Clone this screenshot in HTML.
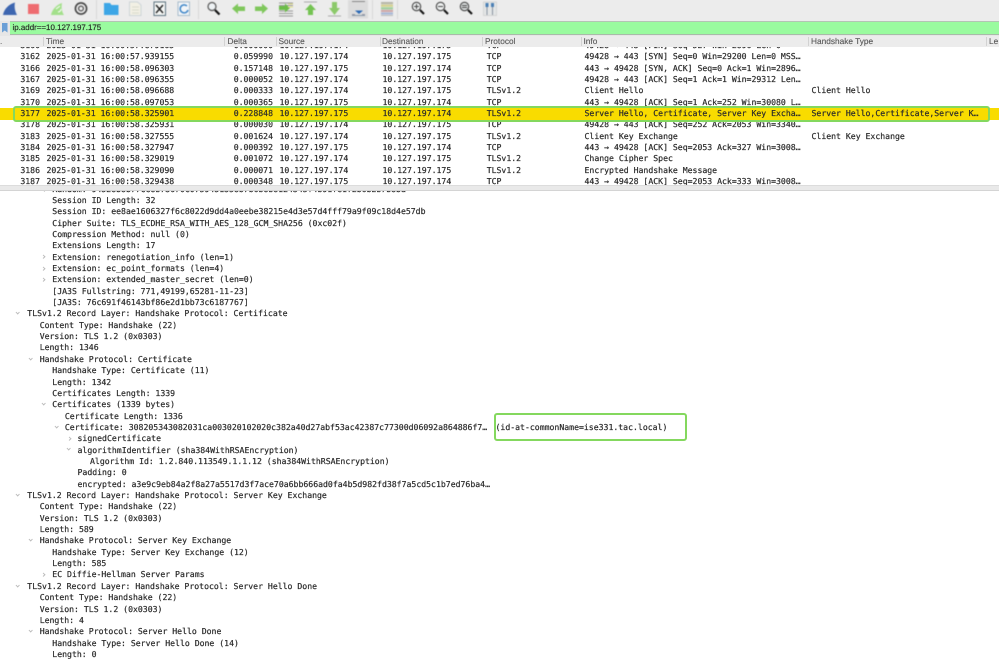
<!DOCTYPE html>
<html><head><meta charset="utf-8"><title>Wireshark</title>
<style>
html,body{margin:0;padding:0;background:#fff;width:999px;height:660px;overflow:hidden}
body{position:relative;font-family:"DejaVu Sans Mono","Liberation Mono",monospace;font-size:8.17px;color:#2b2b2b;text-rendering:geometricPrecision;-webkit-text-stroke:.2px #2b2b2b}
.abs{position:absolute}
#tb{left:0;top:0;width:999px;height:21px;background:#ececec}
#tb svg{position:absolute;left:0;top:0;filter:blur(.5px)}
#fb{left:0;top:21px;width:999px;height:15px;background:#e6e6e6}
#fg{left:10px;top:22px;width:989px;height:11.5px;background:#9afb9f;border-top:1px solid #b4c4b4;border-bottom:1px solid #a9bba9;box-sizing:content-box;margin-top:-1px}
#ft{left:12.5px;top:22px;height:12px;font:7.95px/11.5px "Liberation Sans",sans-serif;color:#2c3a2c;z-index:2;white-space:pre}
#hd{left:0;top:36px;width:999px;height:11px;background:#ececec;font:8.3px/11px "Liberation Sans",sans-serif;color:#555;-webkit-text-stroke:.1px #555}
#hd span{position:absolute;top:0;white-space:pre}
#hd b{position:absolute;top:1px;width:1px;height:9px;background:#d2d2d2}
#pl{left:0;top:47px;width:999px;height:138px;overflow:hidden;background:#fff}
.r{position:absolute;left:0;width:999px;height:11.33px;line-height:11.33px;white-space:pre;margin-top:.6px}
.r span{position:absolute;top:0}
.n{right:959px}.t{left:46.5px}.d{right:726px}.s{left:279.5px}.e{left:382.5px}.p{left:486.7px}.i{left:584.5px}.h{left:811.5px}
#sb{left:0;top:184.5px;width:999px;height:6.5px;background:#e9e9e9;border-top:1px solid #dcdcdc;border-bottom:1px solid #d4d4d4;box-sizing:border-box}
#dt{left:0;top:191px;width:999px;height:469px;overflow:hidden;background:#fff}
.l{position:absolute;height:11.35px;line-height:11.35px;white-space:pre;left:0;margin-top:.3px}
.l i{position:absolute;width:2.4px;height:2.4px;border-right:1px solid #bbb;border-bottom:1px solid #bbb}
i.o{transform:rotate(45deg);top:2.8px}
i.c{transform:rotate(-45deg);top:3.8px}
.gb{position:absolute;border:2px solid #84d85e;border-radius:3px;box-sizing:border-box}
#all{position:absolute;left:0;top:0;width:999px;height:660px;filter:blur(.3px)}
</style></head>
<body><div id="all">
<div id="tb" class="abs">
<svg width="999" height="21" viewBox="0 0 999 21">
<path d="M3 15 C4 9 9 4 15 2.500 C14 7 15 11 17 15 Z" fill="#3d66b0"/>
<rect x="28" y="4" width="11" height="10" fill="#ee6c70"/>
<path d="M51 15 C52 10 56 5 62 3 C61 8 62 12 64 15 Z" fill="#a3e08b"/><path d="M56 9l4-3M58 12a3 3 0 0 0 3-3" stroke="#fff" fill="none"/>
<circle cx="81" cy="8.500" r="5.600" fill="none" stroke="#444" stroke-width="1.600"/><circle cx="81" cy="8.500" r="2.400" fill="none" stroke="#555" stroke-width="1.300"/>
<rect x="96" y="0" width="1" height="19" fill="#d8d8d8"/>
<path d="M104 3h6l1.500 2h7v10h-14.500z" fill="#3ca6e6"/>
<path d="M129.500 2h8l3.500 3v10.500h-11.500z" fill="#f2f0e4" stroke="#cdd4d8"/><path d="M132 7h7M132 10h7M132 13h7" stroke="#d9d9cc"/>
<path d="M154 2h11.500v13.500h-11.500z" fill="#f4f6f4" stroke="#5d7380"/><path d="M156 5l7 8M163 5l-7 8" stroke="#222" stroke-width="1.400"/>
<path d="M178 2h11.500v13.500h-11.500z" fill="#f2f5f8" stroke="#a8bccb"/><path d="M187 6a4 4 0 1 0 1 4" fill="none" stroke="#3f86c8" stroke-width="1.500"/>
<rect x="198" y="0" width="1" height="19" fill="#d8d8d8"/>
<circle cx="212" cy="6.500" r="4" fill="#eef2f4" stroke="#555" stroke-width="1.200"/><path d="M215 10l4.500 4.500" stroke="#111" stroke-width="2.200"/>
<path d="M232 8.500l6-5v3h7v4.500h-7v3z" fill="#7fc75c"/>
<path d="M268 8.500l-6-5v3h-7v4.500h7v3z" fill="#7fc75c"/>
<path d="M279 3h14M279 5.500h14M279 11h14M279 13.500h14M279 16h14" stroke="#9a9a9a"/><path d="M279 6h6v-2.500l5 4.500-5 4.500v-2.500h-6z" fill="#6bbd48"/><path d="M288 4h5M288 7h5" stroke="#e3e08a"/>
<path d="M304 2h13" stroke="#aaa"/><path d="M310.500 4l5.500 6h-3v5h-5v-5h-3z" fill="#74c352"/>
<path d="M328 16h13" stroke="#aaa"/><path d="M332 2h5v6h3l-5.500 7-5.500-7h3z" fill="#8cc96a"/>
<rect x="348" y="0" width="20" height="18.500" fill="#dcdcdc"/><path d="M352 1.500h13" stroke="#888"/><path d="M352 14.500h3M362 14.500h3" stroke="#99a"/><path d="M355 10.500h8l-4 3.500z" fill="#2c69b5"/><path d="M352 15.500h13" stroke="#8a9aa8"/>
<rect x="372" y="0" width="1" height="19" fill="#d8d8d8"/>
<rect x="381" y="2" width="12" height="2.200" fill="#b7b7a8"/><rect x="381" y="4.600" width="12" height="2.200" fill="#d5d28f"/><rect x="381" y="7.200" width="12" height="2.200" fill="#9fcf9f"/><rect x="381" y="9.800" width="12" height="2.200" fill="#cfa8a8"/><rect x="381" y="12.400" width="12" height="2.200" fill="#a8b8d6"/><rect x="381" y="15" width="12" height="1" fill="#bbb"/>
<rect x="397" y="0" width="1" height="19" fill="#d8d8d8"/>
<circle cx="416.500" cy="6.500" r="4.200" fill="#eef0f0" stroke="#444" stroke-width="1.100"/><path d="M420 10l4 4" stroke="#111" stroke-width="2"/><path d="M414 6.500h5M416.500 4v5" stroke="#444"/>
<circle cx="440.500" cy="6.500" r="4.200" fill="#eef0f0" stroke="#444" stroke-width="1.100"/><path d="M444 10l4 4" stroke="#111" stroke-width="2"/><path d="M438 6.500h5" stroke="#444"/>
<circle cx="464.500" cy="6.500" r="4.200" fill="#dfe3e3" stroke="#444" stroke-width="1.100"/><path d="M468 10l4 4" stroke="#111" stroke-width="2"/><path d="M462 5.500h5M462 7.500h5" stroke="#444"/>
<rect x="483.500" y="2" width="13" height="13.500" fill="#e3e6e6" stroke="#c7c7c7" stroke-width=".6"/><path d="M487 3v12M492.500 3v12" stroke="#8a93a0"/><rect x="485.500" y="3" width="3" height="4" fill="#4a7fb5"/><rect x="491" y="3" width="3" height="4" fill="#4a7fb5"/>
</svg>
</div>
<div id="fb" class="abs"></div>
<svg class="abs" style="left:2px;top:23px" width="6" height="10"><path d="M0 0h5.500v9.500l-2.750-2-2.750 2z" fill="#6a9fd6"/></svg>
<div id="fg" class="abs"></div>
<div id="ft" class="abs">ip.addr==10.127.197.175</div>
<div id="hd" class="abs">
<span style="left:0;color:#777">.</span>
<b style="left:43px"></b><span style="left:46px">Time</span>
<b style="left:224px"></b><span style="left:227.500px">Delta</span>
<b style="left:276px"></b><span style="left:278.500px">Source</span>
<b style="left:380px"></b><span style="left:382px">Destination</span>
<b style="left:482px"></b><span style="left:485px">Protocol</span>
<b style="left:581px"></b><span style="left:583.500px">Info</span>
<b style="left:808px"></b><span style="left:811px">Handshake Type</span>
<b style="left:986px"></b><span style="left:989px">Le</span>
</div>
<div id="pl" class="abs">
<div class="r" style="top:-7.700px"><span class="n">3160</span><span class="t">2025-01-31 16:00:57.879165</span><span class="d">0.000000</span><span class="s">10.127.197.174</span><span class="e">10.127.197.175</span><span class="p">TCP</span><span class="i">49428 → 443 [FIN] Seq=527 Win=2896 Len=0</span></div>
<div class="r" style="top:3.630px"><span class="n">3162</span><span class="t">2025-01-31 16:00:57.939155</span><span class="d">0.059990</span><span class="s">10.127.197.174</span><span class="e">10.127.197.175</span><span class="p">TCP</span><span class="i">49428 → 443 [SYN] Seq=0 Win=29200 Len=0 MSS…</span></div>
<div class="r" style="top:14.960px"><span class="n">3166</span><span class="t">2025-01-31 16:00:58.096303</span><span class="d">0.157148</span><span class="s">10.127.197.175</span><span class="e">10.127.197.174</span><span class="p">TCP</span><span class="i">443 → 49428 [SYN, ACK] Seq=0 Ack=1 Win=2896…</span></div>
<div class="r" style="top:26.290px"><span class="n">3167</span><span class="t">2025-01-31 16:00:58.096355</span><span class="d">0.000052</span><span class="s">10.127.197.174</span><span class="e">10.127.197.175</span><span class="p">TCP</span><span class="i">49428 → 443 [ACK] Seq=1 Ack=1 Win=29312 Len…</span></div>
<div class="r" style="top:37.620px"><span class="n">3169</span><span class="t">2025-01-31 16:00:58.096688</span><span class="d">0.000333</span><span class="s">10.127.197.174</span><span class="e">10.127.197.175</span><span class="p">TLSv1.2</span><span class="i">Client Hello</span><span class="h">Client Hello</span></div>
<div class="r" style="top:48.950px"><span class="n">3170</span><span class="t">2025-01-31 16:00:58.097053</span><span class="d">0.000365</span><span class="s">10.127.197.175</span><span class="e">10.127.197.174</span><span class="p">TCP</span><span class="i">443 → 49428 [ACK] Seq=1 Ack=252 Win=30080 L…</span></div>
<div class="r" style="top:71.610px"><span class="n">3178</span><span class="t">2025-01-31 16:00:58.325931</span><span class="d">0.000030</span><span class="s">10.127.197.174</span><span class="e">10.127.197.175</span><span class="p">TCP</span><span class="i">49428 → 443 [ACK] Seq=252 Ack=2053 Win=3340…</span></div>
<div style="position:absolute;left:0;top:61px;width:999px;height:12px;background:#f9dc00"></div>
<div class="r" style="top:60.280px"><span class="n">3177</span><span class="t">2025-01-31 16:00:58.325901</span><span class="d">0.228848</span><span class="s">10.127.197.175</span><span class="e">10.127.197.174</span><span class="p">TLSv1.2</span><span class="i">Server Hello, Certificate, Server Key Excha…</span><span class="h">Server Hello,Certificate,Server K…</span></div>
<div class="r" style="top:82.940px"><span class="n">3183</span><span class="t">2025-01-31 16:00:58.327555</span><span class="d">0.001624</span><span class="s">10.127.197.174</span><span class="e">10.127.197.175</span><span class="p">TLSv1.2</span><span class="i">Client Key Exchange</span><span class="h">Client Key Exchange</span></div>
<div class="r" style="top:94.270px"><span class="n">3184</span><span class="t">2025-01-31 16:00:58.327947</span><span class="d">0.000392</span><span class="s">10.127.197.175</span><span class="e">10.127.197.174</span><span class="p">TCP</span><span class="i">443 → 49428 [ACK] Seq=2053 Ack=327 Win=3008…</span></div>
<div class="r" style="top:105.600px"><span class="n">3185</span><span class="t">2025-01-31 16:00:58.329019</span><span class="d">0.001072</span><span class="s">10.127.197.174</span><span class="e">10.127.197.175</span><span class="p">TLSv1.2</span><span class="i">Change Cipher Spec</span></div>
<div class="r" style="top:116.930px"><span class="n">3186</span><span class="t">2025-01-31 16:00:58.329090</span><span class="d">0.000071</span><span class="s">10.127.197.174</span><span class="e">10.127.197.175</span><span class="p">TLSv1.2</span><span class="i">Encrypted Handshake Message</span></div>
<div class="r" style="top:128.260px"><span class="n">3187</span><span class="t">2025-01-31 16:00:58.329438</span><span class="d">0.000348</span><span class="s">10.127.197.175</span><span class="e">10.127.197.174</span><span class="p">TCP</span><span class="i">443 → 49428 [ACK] Seq=2053 Ack=333 Win=3008…</span></div>
</div>
<div id="sb" class="abs"></div>
<div class="gb" style="left:12.500px;top:105.800px;width:977px;height:16.200px"></div>
<div id="dt" class="abs">
<div class="l" style="top:-7.400px;padding-left:52.300px"><i class="c" style="left:43px"></i>Random: 94528b8b77ce8b73670c0759451358b7b6b8b8124345f4b91fe1f2b6b2b7b8ba</div>
<div class="l" style="top:3.650px;padding-left:52.300px">Session ID Length: 32</div>
<div class="l" style="top:15px;padding-left:52.300px">Session ID: ee8ae1606327f6c8022d9dd4a0eebe38215e4d3e57d4fff79a9f09c18d4e57db</div>
<div class="l" style="top:26.350px;padding-left:52.300px">Cipher Suite: TLS_ECDHE_RSA_WITH_AES_128_GCM_SHA256 (0xc02f)</div>
<div class="l" style="top:37.700px;padding-left:52.300px">Compression Method: null (0)</div>
<div class="l" style="top:49.050px;padding-left:52.300px">Extensions Length: 17</div>
<div class="l" style="top:60.400px;padding-left:52.300px"><i class="c" style="left:42px"></i>Extension: renegotiation_info (len=1)</div>
<div class="l" style="top:71.750px;padding-left:52.300px"><i class="c" style="left:42px"></i>Extension: ec_point_formats (len=4)</div>
<div class="l" style="top:83.100px;padding-left:52.300px"><i class="c" style="left:42px"></i>Extension: extended_master_secret (len=0)</div>
<div class="l" style="top:94.450px;padding-left:52.300px">[JA3S Fullstring: 771,49199,65281-11-23]</div>
<div class="l" style="top:105.800px;padding-left:52.300px">[JA3S: 76c691f46143bf86e2d1bb73c6187767]</div>
<div class="l" style="top:117.150px;padding-left:27.300px"><i class="o" style="left:16px"></i>TLSv1.2 Record Layer: Handshake Protocol: Certificate</div>
<div class="l" style="top:128.500px;padding-left:39.700px">Content Type: Handshake (22)</div>
<div class="l" style="top:139.850px;padding-left:39.700px">Version: TLS 1.2 (0x0303)</div>
<div class="l" style="top:151.200px;padding-left:39.700px">Length: 1346</div>
<div class="l" style="top:162.550px;padding-left:39.700px"><i class="o" style="left:29px"></i>Handshake Protocol: Certificate</div>
<div class="l" style="top:173.900px;padding-left:52.300px">Handshake Type: Certificate (11)</div>
<div class="l" style="top:185.250px;padding-left:52.300px">Length: 1342</div>
<div class="l" style="top:196.600px;padding-left:52.300px">Certificates Length: 1339</div>
<div class="l" style="top:207.950px;padding-left:52.300px"><i class="o" style="left:42px"></i>Certificates (1339 bytes)</div>
<div class="l" style="top:219.300px;padding-left:64.900px">Certificate Length: 1336</div>
<div class="l" style="top:230.650px;padding-left:64.900px"><i class="o" style="left:55px"></i>Certificate: 308205343082031ca003020102020c382a40d27abf53ac42387c77300d06092a864886f7…</div>
<div class="l" style="top:230.650px;padding-left:495.500px">(id-at-commonName=ise331.tac.local)</div>
<div class="l" style="top:242px;padding-left:77.500px"><i class="c" style="left:68px"></i>signedCertificate</div>
<div class="l" style="top:253.350px;padding-left:77.500px"><i class="o" style="left:67px"></i>algorithmIdentifier (sha384WithRSAEncryption)</div>
<div class="l" style="top:264.700px;padding-left:90px">Algorithm Id: 1.2.840.113549.1.1.12 (sha384WithRSAEncryption)</div>
<div class="l" style="top:276.050px;padding-left:77.500px">Padding: 0</div>
<div class="l" style="top:287.400px;padding-left:77.500px">encrypted: a3e9c9eb84a2f8a27a5517d3f7ace70a6bb666ad0fa4b5d982fd38f7a5cd5c1b7ed76ba4…</div>
<div class="l" style="top:298.750px;padding-left:27.300px"><i class="o" style="left:16px"></i>TLSv1.2 Record Layer: Handshake Protocol: Server Key Exchange</div>
<div class="l" style="top:310.100px;padding-left:39.700px">Content Type: Handshake (22)</div>
<div class="l" style="top:321.450px;padding-left:39.700px">Version: TLS 1.2 (0x0303)</div>
<div class="l" style="top:332.800px;padding-left:39.700px">Length: 589</div>
<div class="l" style="top:344.150px;padding-left:39.700px"><i class="o" style="left:29px"></i>Handshake Protocol: Server Key Exchange</div>
<div class="l" style="top:355.500px;padding-left:52.300px">Handshake Type: Server Key Exchange (12)</div>
<div class="l" style="top:366.850px;padding-left:52.300px">Length: 585</div>
<div class="l" style="top:378.200px;padding-left:52.300px"><i class="c" style="left:42px"></i>EC Diffie-Hellman Server Params</div>
<div class="l" style="top:389.550px;padding-left:27.300px"><i class="o" style="left:16px"></i>TLSv1.2 Record Layer: Handshake Protocol: Server Hello Done</div>
<div class="l" style="top:400.900px;padding-left:39.700px">Content Type: Handshake (22)</div>
<div class="l" style="top:412.250px;padding-left:39.700px">Version: TLS 1.2 (0x0303)</div>
<div class="l" style="top:423.600px;padding-left:39.700px">Length: 4</div>
<div class="l" style="top:434.950px;padding-left:39.700px"><i class="o" style="left:29px"></i>Handshake Protocol: Server Hello Done</div>
<div class="l" style="top:446.300px;padding-left:52.300px">Handshake Type: Server Hello Done (14)</div>
<div class="l" style="top:457.650px;padding-left:52.300px">Length: 0</div>
</div>
<div class="gb" style="left:494px;top:413px;width:193px;height:28px"></div>
</div></body></html>
